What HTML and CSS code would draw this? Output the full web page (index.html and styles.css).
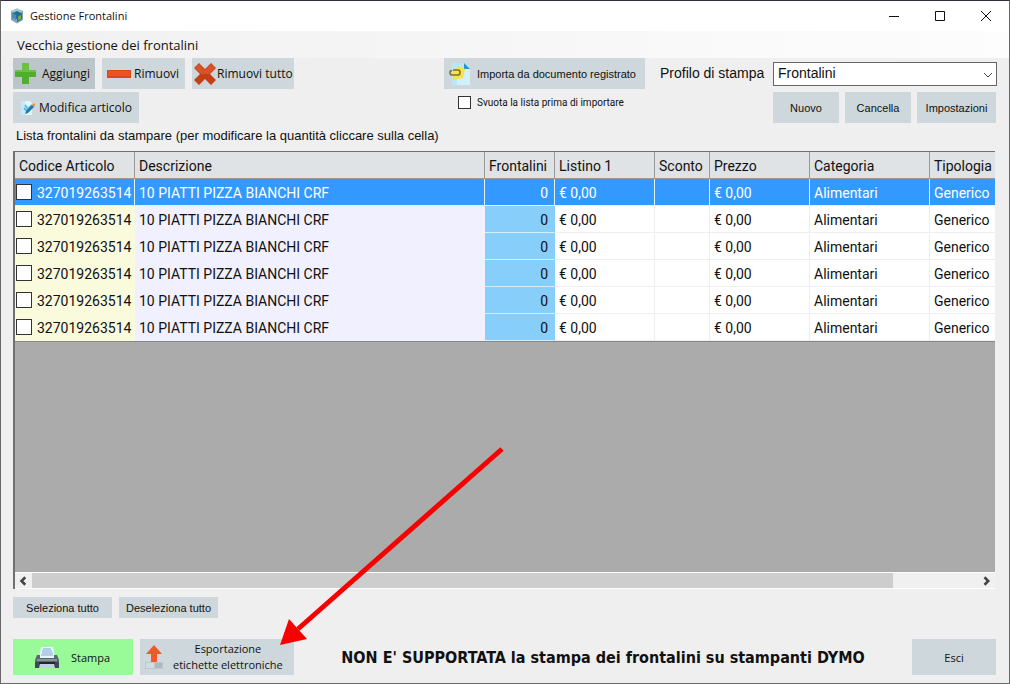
FILE: index.html
```html
<!DOCTYPE html>
<html lang="it">
<head>
<meta charset="utf-8">
<title>Gestione Frontalini</title>
<link rel="stylesheet" href="styles.css">
</head>
<body>
<div class="window">
  <header class="titlebar">
    <svg class="app-icon" viewBox="0 0 16 16" aria-hidden="true">
      <path d="M8 0.5 14 3v9L8 15.5 2 12V3z" fill="#7fa9b5"/>
      <path d="M8 0.5 14 3 8 6 2 3z" fill="#a5c6cc"/>
      <path d="M4 5 8 3l4 2-1 4-3 2-4-2z" fill="#1c6f96"/>
      <path d="M8 7 13 5v6l-5 3z" fill="#386c7b"/>
      <path d="M9 8.500 12 7v4l-3 1z" fill="#7da85a"/>
      <path d="M3 5 7 7v5L3 10z" fill="#4b8fb0"/>
    </svg>
    <h1 class="title">Gestione Frontalini</h1>
    <button class="caption" type="button" aria-label="Riduci a icona"><svg viewBox="0 0 12 12"><path d="M1 6.500h10" /></svg></button>
    <button class="caption" type="button" aria-label="Ingrandisci"><svg viewBox="0 0 12 12"><path d="M1.500 1.500h9v9h-9z"/></svg></button>
    <button class="caption" type="button" aria-label="Chiudi"><svg viewBox="0 0 12 12"><path d="M1 1l10 10M11 1 1 11"/></svg></button>
  </header>

  <nav class="menubar"><button class="menu-item" type="button">Vecchia gestione dei frontalini</button></nav>

  <main class="content">
    <section class="toolbar">
      <div class="stack">
        <div class="row">
          <button class="btn btn-add" type="button">
            <svg class="icon-l" viewBox="0 0 24 24" aria-hidden="true"><path d="M8 1h7v7h7v7h-7v7H8v-7H1V8h7z" fill="#4fae2b"/><path d="M8 1h7v7h7v2H1V8h7z" fill="#6cc043"/></svg>
            Aggiungi</button>
          <button class="btn btn-remove" type="button">
            <svg class="icon-l" viewBox="0 0 24 24" aria-hidden="true"><path d="M0 8h24v8H0z" fill="#d9481c"/><path d="M1 9h22v5H1z" fill="#f0521f"/></svg>
            Rimuovi</button>
          <button class="btn btn-clear" type="button">
            <svg class="icon-l" viewBox="0 0 24 24" aria-hidden="true"><path d="M6 1l6 6 6-6 5 5-6 6 6 6-5 5-6-6-6 6-5-5 6-6-6-6z" fill="#c53f14"/><path d="M6 2l6 6 6-6 4 4-6 6-8 0-6-6z" fill="#d9522a"/></svg>
            Rimuovi tutto</button>
        </div>
        <button class="btn btn-edit" type="button">
          <svg class="icon-s" viewBox="0 0 16 16" aria-hidden="true"><path d="M1 1h9l2 2v12H1z" fill="#e4f5fc"/><path d="M1 1h4v14H1z" fill="#c5e9f8"/><path d="M5 5l3 4 4-4M4 8l3 3" fill="none" stroke="#59bbe6" stroke-width="2"/><path d="M6 11 12 5l2 2-6 6-3 1z" fill="#2776a9"/><path d="M12 5l2-2 1 2-1 2z" fill="#e8863d"/></svg>
          Modifica articolo</button>
      </div>

      <div class="stack import">
        <button class="btn btn-import" type="button">
          <svg class="icon-l" viewBox="0 0 24 24" aria-hidden="true"><path d="M4 1h13l5 5v17H4z" fill="#b9e6f9"/><path d="M9 7h13v16H9z" fill="#d3f1fc"/><path d="M16 1l6 6h-6z" fill="#2597d3"/><path d="M4 9 11 4l6 3-2 9-10 2z" fill="#f4e34a"/><path d="M5 8h5q2 0 2 2.500T10 13H4q-2 0-2-2.500T4 9" fill="none" stroke="#77703a" stroke-width="1.500"/></svg>
          Importa da documento registrato</button>
        <label class="check"><input class="box" type="checkbox">Svuota la lista prima di importare</label>
      </div>

      <div class="profile">
        <label class="profile-label" for="profilo">Profilo di stampa</label>
        <div class="stack profile-controls">
          <div class="combo">
            <select id="profilo" class="combo-select"><option>Frontalini</option></select>
            <svg class="combo-arrow" viewBox="0 0 10 6" aria-hidden="true"><path d="M1 1l4 4 4-4"/></svg>
          </div>
          <div class="row profile-row">
            <button class="btn btn-sans" type="button">Nuovo</button>
            <button class="btn btn-sans" type="button">Cancella</button>
            <button class="btn btn-sans btn-settings" type="button">Impostazioni</button>
          </div>
        </div>
      </div>
    </section>

    <p class="caption-text">Lista frontalini da stampare (per modificare la quantità cliccare sulla cella)</p>

    <section class="grid">
      <table class="items">
        <colgroup><col class="c-code"><col class="c-desc"><col class="c-qty"><col class="c-list"><col class="c-disc"><col class="c-price"><col class="c-cat"><col></colgroup>
        <thead><tr><th>Codice Articolo</th><th>Descrizione</th><th>Frontalini</th><th>Listino 1</th><th>Sconto</th><th>Prezzo</th><th>Categoria</th><th>Tipologia</th></tr></thead>
        <tbody>
          <tr class="selected"><td class="code"><label class="pick"><input class="box big" type="checkbox"><span class="pick-text">327019263514</span></label></td><td class="desc">10 PIATTI PIZZA BIANCHI CRF</td><td class="qty">0</td><td>€ 0,00</td><td></td><td>€ 0,00</td><td>Alimentari</td><td>Generico</td></tr>
          <tr><td class="code"><label class="pick"><input class="box big" type="checkbox"><span class="pick-text">327019263514</span></label></td><td class="desc">10 PIATTI PIZZA BIANCHI CRF</td><td class="qty">0</td><td>€ 0,00</td><td></td><td>€ 0,00</td><td>Alimentari</td><td>Generico</td></tr>
          <tr><td class="code"><label class="pick"><input class="box big" type="checkbox"><span class="pick-text">327019263514</span></label></td><td class="desc">10 PIATTI PIZZA BIANCHI CRF</td><td class="qty">0</td><td>€ 0,00</td><td></td><td>€ 0,00</td><td>Alimentari</td><td>Generico</td></tr>
          <tr><td class="code"><label class="pick"><input class="box big" type="checkbox"><span class="pick-text">327019263514</span></label></td><td class="desc">10 PIATTI PIZZA BIANCHI CRF</td><td class="qty">0</td><td>€ 0,00</td><td></td><td>€ 0,00</td><td>Alimentari</td><td>Generico</td></tr>
          <tr><td class="code"><label class="pick"><input class="box big" type="checkbox"><span class="pick-text">327019263514</span></label></td><td class="desc">10 PIATTI PIZZA BIANCHI CRF</td><td class="qty">0</td><td>€ 0,00</td><td></td><td>€ 0,00</td><td>Alimentari</td><td>Generico</td></tr>
          <tr><td class="code"><label class="pick"><input class="box big" type="checkbox"><span class="pick-text">327019263514</span></label></td><td class="desc">10 PIATTI PIZZA BIANCHI CRF</td><td class="qty">0</td><td>€ 0,00</td><td></td><td>€ 0,00</td><td>Alimentari</td><td>Generico</td></tr>
        </tbody>
      </table>
      <div class="scrollbar">
        <button class="scroll-btn" type="button" aria-label="Scorri a sinistra"><svg viewBox="0 0 8 8"><path d="M5 1 2 4l3 3"/></svg></button>
        <div class="track"><div class="thumb"></div></div>
        <button class="scroll-btn" type="button" aria-label="Scorri a destra"><svg viewBox="0 0 8 8"><path d="M2 1l3 3-3 3"/></svg></button>
      </div>
    </section>

    <div class="row select-row">
      <button class="btn btn-sans btn-small" type="button">Seleziona tutto</button>
      <button class="btn btn-sans btn-small" type="button">Deseleziona tutto</button>
    </div>

    <footer class="footer">
      <button class="btn btn-print" type="button">
        <svg class="icon-l" viewBox="0 0 24 24" aria-hidden="true"><path d="M6 2h12l2 11H4z" fill="#e9f5fd"/><path d="M8 4h8M7 6h10M7 8h11M6 10h12" stroke="#7ca9d2"/><path d="M2 10h3v3h14v-3h3l2 5v8H0v-8z" fill="#59676f"/><path d="M2 14h20v2H2z" fill="#87939a"/><path d="M0 17h24v6H0z" fill="#3d4a55"/><path d="M5 19h14l1 4H4z" fill="#c3d0d9"/><path d="M4 17h16v2H4z" fill="#1d2830"/></svg>
        Stampa</button>
      <button class="btn btn-export" type="button">
        <svg class="icon-l" viewBox="0 0 24 24" aria-hidden="true"><path d="M3 17h18v7H3z" fill="#bfc8cd"/><path d="M4 18h8v5H4z" fill="#d5dbde"/><path d="M13 18h7v5h-7z" fill="#aeb9bf"/><path d="M12 0l8 9h-5v8H9V9H4z" fill="#f05a2b"/></svg>
        <span class="two-lines">Esportazione<br>etichette elettroniche</span></button>
      <strong class="warning">NON E' SUPPORTATA la stampa dei frontalini su stampanti DYMO</strong>
      <button class="btn btn-exit" type="button">Esci</button>
    </footer>
  </main>

  <svg class="pointer" viewBox="0 0 224 200" aria-hidden="true"><path d="M222 2 18 182" stroke="#f80000" stroke-width="5"/><path d="M0 198 9 172 27 192z" fill="#f80000"/></svg>
</div>
</body>
</html>
```
FILE: styles.css
```css
* { box-sizing: border-box; }

body {
  margin: 0;
  font-family: "Open Sans", "Noto Sans", sans-serif;
  font-size: 12px;
  color: #111;
}

button, select, input { font: inherit; color: inherit; margin: 0; }
svg { display: block; }

.window {
  position: relative;
  display: flex;
  flex-direction: column;
  min-height: 100vh;
  border: 1px solid #686868;
  border-top-color: #30303c;
  background: #efefef;
}

.titlebar {
  display: flex;
  align-items: center;
  height: 30px;
  padding-left: 8px;
  background: #fff;
}
.app-icon { width: 16px; height: 16px; }
.title {
  flex: 1;
  margin: 0 0 0 5px;
  font-size: 11px;
  line-height: 16px;
  font-weight: 400;
}
.caption {
  display: grid;
  place-items: center;
  width: 46px;
  height: 29px;
  padding: 0;
  border: 0;
  background: none;
}
.caption svg { width: 12px; height: 12px; fill: none; stroke: #111; }

.menubar {
  display: flex;
  height: 27px;
  background: linear-gradient(to right, #f0f0f0, #fdfdfd);
}
.menu-item {
  padding: 0 16px;
  border: 0;
  background: none;
  font-size: 13px;
}

.content {
  flex: 1;
  display: flex;
  flex-direction: column;
  padding: 0 12px 8px;
}

.toolbar { display: flex; }
.row { display: flex; gap: 7px; }
.stack {
  display: flex;
  flex-direction: column;
  align-items: flex-start;
  gap: 3px;
}

.btn {
  display: flex;
  align-items: center;
  justify-content: flex-start;
  height: 31px;
  padding: 0;
  border: 0;
  background: #ced7dc;
  white-space: nowrap;
}
.btn-sans, .btn-import, .check {
  font-family: "Liberation Sans", sans-serif;
  font-size: 11px;
}
.btn-sans { justify-content: center; }
.btn-add { width: 82px; gap: 4px; padding-left: 1px; background: #bcc5ca; }
.btn-remove { width: 83px; gap: 3px; padding-left: 5px; }
.btn-clear { width: 102px; padding-left: 1px; }
.btn-edit { width: 126px; gap: 3px; padding-left: 7px; }
.btn-import { width: 201px; gap: 5px; padding-left: 4px; }
.icon-l { flex: none; width: 24px; height: 24px; }
.icon-s { flex: none; width: 16px; height: 16px; }

.import { margin-left: auto; }
.check {
  display: flex;
  align-items: center;
  gap: 6px;
  height: 20px;
  padding-left: 14px;
  font-family: Roboto, sans-serif;
  font-size: 10px;
}
.box {
  appearance: none;
  flex: none;
  width: 13px;
  height: 13px;
  border: 1px solid #333;
  background: #fff;
}
.big { width: 16px; height: 16px; }

.profile {
  display: flex;
  justify-content: space-between;
  width: 337px;
  margin-left: 15px;
}
.profile-label {
  padding-top: 7px;
  font: 14px/17px "Liberation Sans", sans-serif;
}
.profile-controls {
  align-items: stretch;
  width: 224px;
  padding-top: 4px;
  gap: 6px;
}
.combo { position: relative; height: 24px; }
.combo-select {
  appearance: none;
  width: 100%;
  height: 24px;
  padding: 0 20px 2px 4px;
  border: 1px solid #666;
  border-radius: 0;
  background: #fff;
  font: 14px "Liberation Sans", sans-serif;
}
.combo-arrow {
  position: absolute;
  right: 4px;
  top: 10px;
  width: 10px;
  height: 6px;
  fill: none;
  stroke: #444;
  pointer-events: none;
}
.profile-row { gap: 6px; padding-right: 1px; }
.profile-row .btn { flex: 1; }
.profile-row .btn-settings { flex: none; width: 79px; }

.caption-text {
  margin: 4px 3px 7px;
  font: 13px/17px "Liberation Sans", sans-serif;
}

.grid {
  flex: 1;
  display: flex;
  flex-direction: column;
  border: 1px solid #707070;
  border-width: 1px 0 0 2px;
  margin-right: 2px;
  background: #ababab;
}
.items {
  width: 100%;
  table-layout: fixed;
  border-collapse: separate;
  border-spacing: 0;
  border-bottom: 1px solid #888;
  font-family: Roboto, "Noto Sans", sans-serif;
  font-size: 14px;
  line-height: 20px;
}
.c-code { width: 120px; }
.c-desc { width: 350px; }
.c-qty { width: 70px; }
.c-list, .c-price { width: 100px; }
.c-disc { width: 55px; }
.c-cat { width: 120px; }
.items th, .items td {
  height: 27px;
  padding: 2px 4px 0;
  overflow: hidden;
  text-align: left;
  font-weight: 400;
  white-space: nowrap;
}
.items th {
  border-right: 1px solid #999;
  border-bottom: 1px solid #999;
  background: #dfe3e6;
}
.items th:last-child { border-right: 0; }
.items td {
  border-right: 1px solid #eee;
  border-bottom: 1px solid #eee;
  background: #fff;
}
.items .code {
  padding: 0;
  border-color: #fafadc;
  background: #fafadc;
}
.items .desc { border-color: #f0f0ff; background: #f0f0ff; }
.items .qty {
  padding-right: 6px;
  border-color: #87cefa;
  border-bottom-color: #d8eefc;
  background: #87cefa;
  text-align: right;
}
.items .selected td {
  border-color: #e4f0fc;
  background: #3399ff;
  color: #fff;
}
.items td:last-child { border-right: 0; }
.pick { display: flex; align-items: center; gap: 5px; padding-left: 1px; }
.pick-text { padding-top: 2px; }

.scrollbar {
  display: flex;
  height: 17px;
  margin-top: auto;
  border-top: 1px solid #fff;
  border-bottom: 1px solid #fff;
  background: #f0f0f0;
}
.scroll-btn {
  display: grid;
  place-items: center;
  width: 17px;
  padding: 0;
  border: 0;
  background: none;
}
.scroll-btn svg { width: 10px; height: 10px; fill: none; stroke: #444; stroke-width: 2; }
.track { flex: 1; }
.thumb { width: 91%; height: 100%; background: #cdcdcd; }

.select-row { margin-top: 8px; }
.btn-small { width: 99px; height: 21px; }

.footer { display: flex; margin-top: 21px; font-size: 11px; }
.footer .btn { height: 36px; }
.footer .btn-print { width: 120px; gap: 12px; padding-left: 22px; background: #98fb98; }
.btn-export { width: 154px; gap: 7px; margin-left: 7px; padding-left: 2px; }
.two-lines { line-height: 16px; }
.warning {
  flex: 1;
  align-self: center;
  text-align: center;
  font: bold 16px "DejaVu Sans Condensed", "DejaVu Sans", sans-serif;
  white-space: nowrap;
}
.footer .btn-exit { justify-content: center; width: 84px; margin-right: 1px; }

.pointer {
  position: absolute;
  left: 279px;
  top: 446px;
  width: 224px;
  height: 200px;
}
```
